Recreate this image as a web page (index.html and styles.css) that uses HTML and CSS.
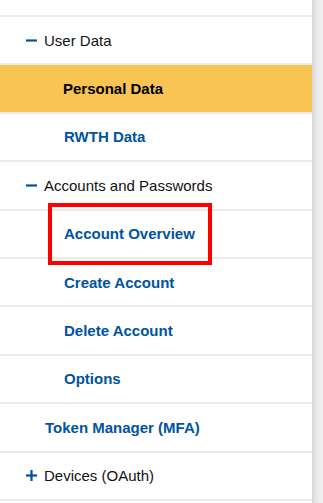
FILE: index.html
```html
<!DOCTYPE html>
<html>
<head>
<meta charset="utf-8">
<link rel="stylesheet" href="styles.css">
</head>
<body>
<div class="page">
  <nav class="nav">
    <div class="top"></div>
    <ul class="menu">
      <li class="item lvl1"><span class="ico"><svg width="11" height="11" viewBox="0 0 11 11"><rect x="0" y="4.4" width="11" height="2.2" fill="#00549f"/></svg></span><span class="label">User Data</span></li>
      <li class="item lvl2 active"><span class="link">Personal Data</span></li>
      <li class="item lvl2"><span class="link">RWTH Data</span></li>
      <li class="item lvl1"><span class="ico"><svg width="11" height="11" viewBox="0 0 11 11"><rect x="0" y="4.4" width="11" height="2.2" fill="#00549f"/></svg></span><span class="label">Accounts and Passwords</span></li>
      <li class="item lvl2 marked"><span class="link">Account Overview</span><span class="mark"></span></li>
      <li class="item lvl2"><span class="link">Create Account</span></li>
      <li class="item lvl2"><span class="link">Delete Account</span></li>
      <li class="item lvl2"><span class="link">Options</span></li>
      <li class="item lvl1b"><span class="link">Token Manager (MFA)</span></li>
      <li class="item lvl1"><span class="ico"><svg width="11" height="11" viewBox="0 0 11 11"><rect x="0" y="4.4" width="11" height="2.2" fill="#00549f"/><rect x="4.4" y="0" width="2.2" height="11" fill="#00549f"/></svg></span><span class="label">Devices (OAuth)</span></li>
      <li class="item last"></li>
    </ul>
  </nav>
  <div class="shade"></div>
</div>
</body>
</html>
```

FILE: styles.css
```css
html, body {
  margin: 0;
  padding: 0;
  background: #ffffff;
}
body {
  font-family: "Liberation Sans", Arial, sans-serif;
  font-size: 15px;
}
.page {
  display: flex;
  width: 323px;
  height: 503px;
  overflow: hidden;
}
.nav {
  width: 312px;
  flex: none;
  background: #ffffff;
}
.shade {
  flex: 1;
  background: linear-gradient(to right, #d6d6d6 0%, #e6e6e6 35%, #f2f2f2 100%);
}
.top {
  height: 15px;
}
.menu {
  list-style: none;
  margin: 0;
  padding: 0;
}
.item {
  position: relative;
  height: 46.4px;
  border-top: 2px solid #ebebeb;
  display: flex;
  align-items: center;
  box-sizing: content-box;
}
.lvl1 {
  padding-left: 26px;
  color: #111111;
}
.ico {
  display: flex;
  width: 11px;
  height: 11px;
  margin-right: 7px;
}
.lvl2 {
  padding-left: 64px;
}
.lvl1b {
  padding-left: 45px;
}
.link {
  font-weight: bold;
  color: #00549f;
}
.active {
  background: #f8c453;
  padding-left: 63px;
}
.active .link {
  color: #000000;
}
.marked {
  z-index: 2;
}
.mark {
  position: absolute;
  left: 48px;
  top: -8px;
  width: 156px;
  height: 54px;
  border: 4px solid #ff0000;
}
.last {
  height: 10px;
}
```
